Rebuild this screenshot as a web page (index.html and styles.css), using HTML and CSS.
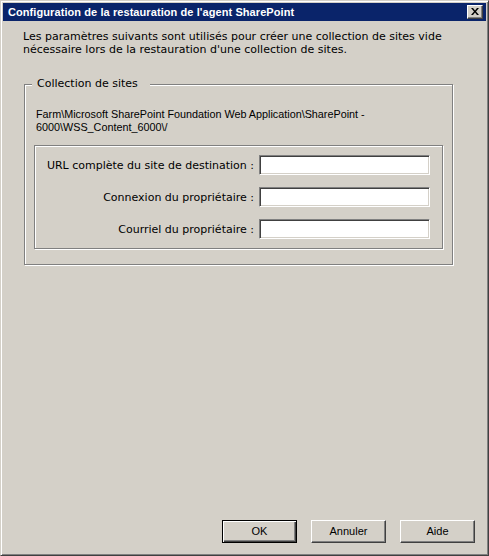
FILE: index.html
```html
<!DOCTYPE html>
<html lang="fr">
<head>
<meta charset="utf-8">
<title>Configuration de la restauration de l'agent SharePoint</title>
<link rel="stylesheet" href="styles.css">
</head>
<body>
<div class="window">
  <div class="titlebar">
    <span class="title">Configuration de la restauration de l'agent SharePoint</span>
    <span class="close" aria-label="Fermer">
      <svg width="8" height="7" viewBox="0 0 8 7"><path d="M0 0h2l2 2.5 2-2.5h2L5 3.5 8 7H6L4 4.5 2 7H0l3-3.5z" fill="#000"/></svg>
    </span>
  </div>
  <div class="content">
    <p class="intro">Les paramètres suivants sont utilisés pour créer une collection de sites vide<br>nécessaire lors de la restauration d'une collection de sites.</p>
    <div class="group">
      <span class="legend">Collection de sites</span>
      <p class="path">Farm\Microsoft SharePoint Foundation Web Application\SharePoint -<br>6000\WSS_Content_6000\/</p>
      <div class="inner">
        <div class="row"><span class="label">URL complète du site de destination :</span><span class="input"></span></div>
        <div class="row"><span class="label">Connexion du propriétaire :</span><span class="input"></span></div>
        <div class="row"><span class="label">Courriel du propriétaire :</span><span class="input"></span></div>
      </div>
    </div>
  </div>
  <div class="buttons">
    <span class="btn default">OK</span>
    <span class="btn">Annuler</span>
    <span class="btn">Aide</span>
  </div>
</div>
</body>
</html>
```

FILE: styles.css
```css
html, body {
  margin: 0;
  padding: 0;
}
body {
  width: 489px;
  height: 556px;
  font-family: "DejaVu Sans", Verdana, sans-serif;
  font-size: 11px;
  color: #000;
}
.window {
  box-sizing: border-box;
  width: 489px;
  height: 556px;
  background: #d4d0c8;
  border: 1px solid;
  border-color: #d4d0c8 #404040 #404040 #d4d0c8;
  box-shadow: inset 1px 1px 0 #fff, inset -1px -1px 0 #808080;
  padding: 2px;
  display: flex;
  flex-direction: column;
}
.titlebar {
  height: 18px;
  background: #0a246a;
  display: flex;
  align-items: center;
  justify-content: space-between;
  padding: 0 3px 0 5px;
}
.title {
  color: #fff;
  font-family: "Liberation Sans", Arial, sans-serif;
  font-weight: bold;
  font-size: 11px;
  letter-spacing: 0.08px;
  white-space: nowrap;
}
.close {
  box-sizing: border-box;
  width: 16px;
  height: 14px;
  background: #d4d0c8;
  border: 1px solid;
  border-color: #fff #404040 #404040 #fff;
  box-shadow: inset -1px -1px 0 #808080;
  display: flex;
  align-items: center;
  justify-content: center;
  padding: 0 1px 1px 0;
}
.close svg {
  display: block;
}
.content {
  flex: 1;
  padding: 9px 0 0 20px;
}
.intro {
  margin: 0;
  line-height: 13px;
}
.group {
  position: relative;
  box-sizing: border-box;
  width: 429px;
  height: 181px;
  margin: 28px 0 0 1px;
  border: 1px solid #808080;
  box-shadow: inset 1px 1px 0 #fff, 1px 1px 0 #fff;
  padding: 23px 8px 0 9px;
}
.legend {
  position: absolute;
  left: 7px;
  top: -8px;
  background: #d4d0c8;
  padding: 0 12px 0 5px;
  line-height: 14px;
}
.path {
  margin: 0 0 11px 2px;
  line-height: 13px;
  font-family: "Liberation Sans", Arial, sans-serif;
  font-size: 10.8px;
}
.inner {
  box-sizing: border-box;
  width: 409px;
  height: 104px;
  border: 1px solid #808080;
  box-shadow: inset 1px 1px 0 #fff, 1px 1px 0 #fff;
  padding: 9px 12px 9px 0;
  display: flex;
  flex-direction: column;
  gap: 12px;
}
.row {
  display: flex;
  align-items: center;
  gap: 5px;
  height: 20px;
}
.label {
  flex: 1;
  text-align: right;
  white-space: nowrap;
}
.input {
  box-sizing: border-box;
  width: 171px;
  height: 20px;
  background: #fff;
  border: 1px solid;
  border-color: #808080 #fff #fff #808080;
  box-shadow: inset 1px 1px 0 #404040, inset -1px -1px 0 #d4d0c8;
}
.buttons {
  display: flex;
  justify-content: flex-end;
  gap: 14px;
  padding: 0 11px 10px 0;
}
.btn {
  box-sizing: border-box;
  width: 75px;
  height: 23px;
  display: flex;
  align-items: center;
  justify-content: center;
  font-family: "Liberation Sans", Arial, sans-serif;
  border: 1px solid;
  border-color: #fff #404040 #404040 #fff;
  box-shadow: inset -1px -1px 0 #808080;
  padding-bottom: 1px;
}
.btn.default {
  border-color: #000;
  box-shadow: inset 1px 1px 0 #fff, inset -1px -1px 0 #404040, inset -2px -2px 0 #808080;
}
```
